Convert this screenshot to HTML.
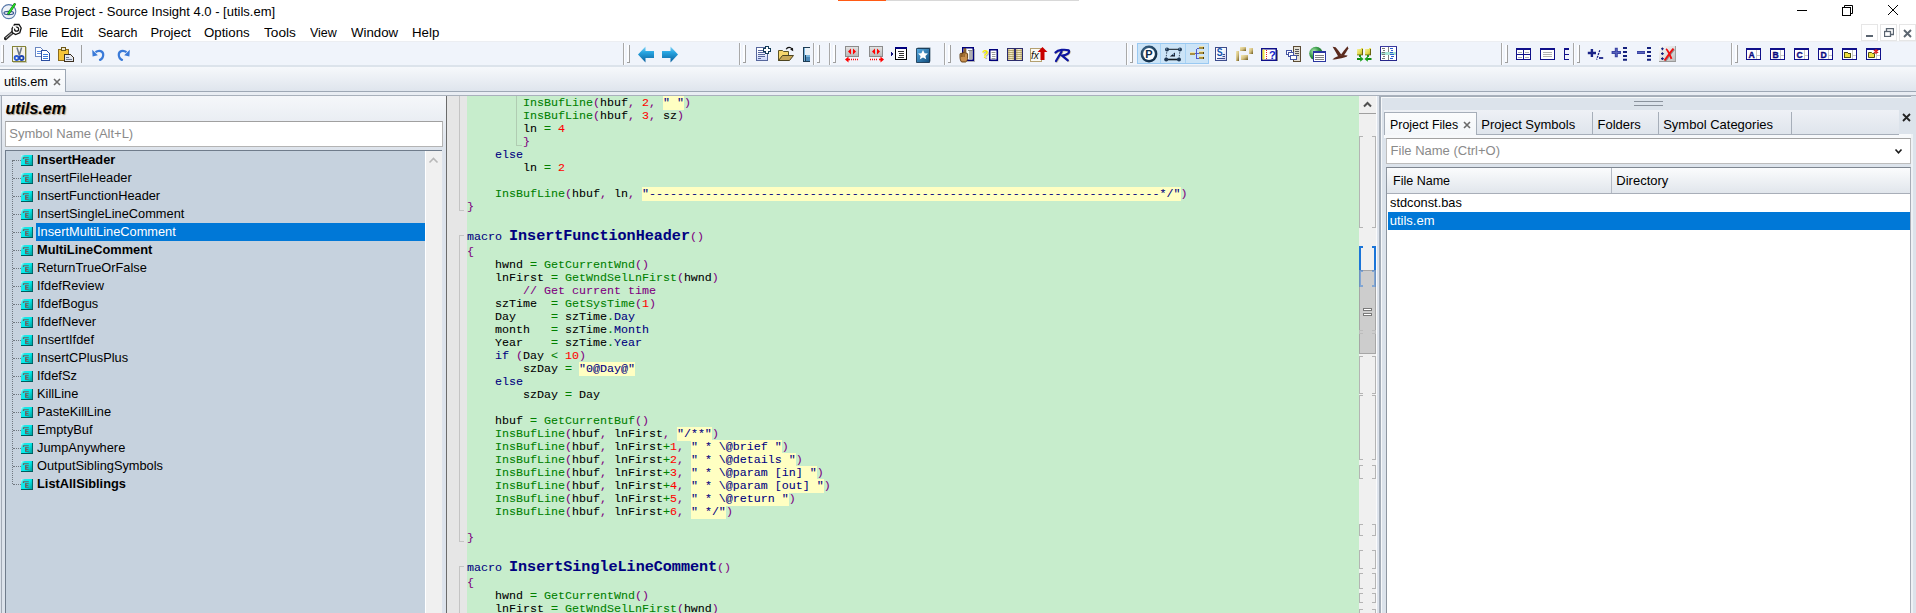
<!DOCTYPE html>
<html><head><meta charset="utf-8"><style>
html,body{margin:0;padding:0;width:1916px;height:613px;overflow:hidden;background:#fff;position:relative}
body{font-family:"Liberation Sans",sans-serif}
div,svg{position:absolute}
.c{-webkit-text-stroke:0.08px currentColor}
</style></head><body>
<div style="position:absolute;left:0px;top:0px;width:1916px;height:42px;background:#fff"></div>
<div style="position:absolute;left:838px;top:0px;width:48px;height:1px;background:#ff5a14"></div>
<div style="position:absolute;left:886px;top:0px;width:193px;height:1px;background:#d8d8d8"></div>
<svg style="position:absolute;left:1px;top:3px" width="17" height="17" viewBox="0 0 17 17"><circle cx="7.8" cy="8.6" r="7" fill="#eef2f8" stroke="#5878a8" stroke-width="1.1"/><ellipse cx="7.8" cy="10" rx="4.8" ry="1.6" fill="none" stroke="#3a5a90" stroke-width="1.2"/><path d="M7.6 10.4L13.6 1.4" stroke="#1a6a1a" stroke-width="2.6" stroke-linecap="round"/><path d="M7.6 10.4L13.6 1.4" stroke="#22e022" stroke-width="1.6" stroke-linecap="round"/></svg>
<div style="position:absolute;left:21.5px;top:4.70px;height:13px;line-height:13px;font-family:'Liberation Sans', sans-serif;font-size:13px;color:#000;white-space:pre;">Base Project - Source Insight 4.0 - [utils.em]</div>
<div style="position:absolute;left:1797px;top:10px;width:10px;height:1px;background:#000"></div>
<svg style="position:absolute;left:1841px;top:4px" width="13" height="12" viewBox="0 0 13 12"><rect x="1.5" y="3.5" width="8" height="8" fill="none" stroke="#000"/><path d="M3.5 3.5V1.5H11.5V9.5H9.5" fill="none" stroke="#000"/></svg>
<svg style="position:absolute;left:1888px;top:5px" width="10" height="10" viewBox="0 0 10 10"><path d="M0 0L10 10M10 0L0 10" stroke="#000" stroke-width="1"/></svg>
<svg style="position:absolute;left:4px;top:23px" width="18" height="18" viewBox="0 0 18 18"><path d="M1.5 15.5L9 9" stroke="#222" stroke-width="3.4" stroke-linecap="round"/><path d="M2 15L9 9" stroke="#c8c8c8" stroke-width="1.6" stroke-dasharray="1 0.6"/><path d="M10.5 1.5L15 1.5L17.2 5L15.8 9.8L11.6 11.6L8.2 9.6L8 5.6Z" fill="#fff" stroke="#111" stroke-width="1.3"/><circle cx="12.6" cy="6.2" r="2" fill="#fff" stroke="#111" stroke-width="1.2"/><path d="M9 3L12 5.5" stroke="#fff" stroke-width="2"/></svg>
<div style="position:absolute;left:28.6px;top:25.90px;height:13px;line-height:13px;font-family:'Liberation Sans', sans-serif;font-size:13px;color:#000;white-space:pre;transform:scaleX(0.9);transform-origin:0 0;">File</div>
<div style="position:absolute;left:61.4px;top:25.90px;height:13px;line-height:13px;font-family:'Liberation Sans', sans-serif;font-size:13px;color:#000;white-space:pre;transform:scaleX(0.98);transform-origin:0 0;">Edit</div>
<div style="position:absolute;left:97.5px;top:25.90px;height:13px;line-height:13px;font-family:'Liberation Sans', sans-serif;font-size:13px;color:#000;white-space:pre;transform:scaleX(0.955);transform-origin:0 0;">Search</div>
<div style="position:absolute;left:150.4px;top:25.90px;height:13px;line-height:13px;font-family:'Liberation Sans', sans-serif;font-size:13px;color:#000;white-space:pre;">Project</div>
<div style="position:absolute;left:204.4px;top:25.90px;height:13px;line-height:13px;font-family:'Liberation Sans', sans-serif;font-size:13px;color:#000;white-space:pre;transform:scaleX(1.02);transform-origin:0 0;">Options</div>
<div style="position:absolute;left:264.2px;top:25.90px;height:13px;line-height:13px;font-family:'Liberation Sans', sans-serif;font-size:13px;color:#000;white-space:pre;transform:scaleX(1.05);transform-origin:0 0;">Tools</div>
<div style="position:absolute;left:310.3px;top:25.90px;height:13px;line-height:13px;font-family:'Liberation Sans', sans-serif;font-size:13px;color:#000;white-space:pre;transform:scaleX(0.96);transform-origin:0 0;">View</div>
<div style="position:absolute;left:351px;top:25.90px;height:13px;line-height:13px;font-family:'Liberation Sans', sans-serif;font-size:13px;color:#000;white-space:pre;transform:scaleX(1.02);transform-origin:0 0;">Window</div>
<div style="position:absolute;left:412.4px;top:25.90px;height:13px;line-height:13px;font-family:'Liberation Sans', sans-serif;font-size:13px;color:#000;white-space:pre;transform:scaleX(1.02);transform-origin:0 0;">Help</div>
<div style="position:absolute;left:1861px;top:24px;width:17px;height:17px;box-sizing:border-box;border:1px solid #e6e6e6;background:#fff"></div>
<div style="position:absolute;left:1880px;top:24px;width:17px;height:17px;box-sizing:border-box;border:1px solid #e6e6e6;background:#fff"></div>
<div style="position:absolute;left:1899px;top:24px;width:17px;height:17px;box-sizing:border-box;border:1px solid #e6e6e6;background:#fff"></div>
<div style="position:absolute;left:1866px;top:35px;width:7px;height:2px;background:#5a6470"></div>
<svg style="position:absolute;left:1884px;top:28px" width="10" height="9" viewBox="0 0 10 9"><rect x="0.5" y="3.5" width="6" height="5" fill="none" stroke="#5a6470" stroke-width="1.3"/><path d="M2.5 3.5V0.5H9.5V6.5H6.5" fill="none" stroke="#5a6470" stroke-width="1.3"/></svg>
<svg style="position:absolute;left:1903px;top:29px" width="10" height="9" viewBox="0 0 10 9"><path d="M1 1L8 8M8 1L1 8" stroke="#5c6670" stroke-width="1.9"/></svg>
<div style="position:absolute;left:0px;top:41px;width:1916px;height:1px;background:#eceef2"></div>
<div style="position:absolute;left:0px;top:42px;width:1916px;height:23px;background:#f0f4fb"></div>
<div style="position:absolute;left:0px;top:65px;width:1916px;height:2px;background:#dce3eb"></div>
<div style="position:absolute;left:1px;top:45px;width:2px;height:17px;border-right:1px solid #a0a0a0;border-bottom:1px solid #a0a0a0;background:#fcfdff"></div>
<div style="position:absolute;left:81px;top:45px;width:1px;height:18px;background:#a0a0a0"></div>
<div style="position:absolute;left:623px;top:43px;width:1px;height:22px;background:#a9a9a9"></div>
<div style="position:absolute;left:624px;top:43px;width:1px;height:22px;background:#fcfdff"></div>
<div style="position:absolute;left:739px;top:43px;width:1px;height:22px;background:#a9a9a9"></div>
<div style="position:absolute;left:740px;top:43px;width:1px;height:22px;background:#fcfdff"></div>
<div style="position:absolute;left:813px;top:43px;width:1px;height:22px;background:#a9a9a9"></div>
<div style="position:absolute;left:814px;top:43px;width:1px;height:22px;background:#fcfdff"></div>
<div style="position:absolute;left:829px;top:43px;width:1px;height:22px;background:#a9a9a9"></div>
<div style="position:absolute;left:830px;top:43px;width:1px;height:22px;background:#fcfdff"></div>
<div style="position:absolute;left:944px;top:43px;width:1px;height:22px;background:#a9a9a9"></div>
<div style="position:absolute;left:945px;top:43px;width:1px;height:22px;background:#fcfdff"></div>
<div style="position:absolute;left:1126px;top:43px;width:1px;height:22px;background:#a9a9a9"></div>
<div style="position:absolute;left:1127px;top:43px;width:1px;height:22px;background:#fcfdff"></div>
<div style="position:absolute;left:1501px;top:43px;width:1px;height:22px;background:#a9a9a9"></div>
<div style="position:absolute;left:1502px;top:43px;width:1px;height:22px;background:#fcfdff"></div>
<div style="position:absolute;left:1573px;top:43px;width:1px;height:22px;background:#a9a9a9"></div>
<div style="position:absolute;left:1574px;top:43px;width:1px;height:22px;background:#fcfdff"></div>
<div style="position:absolute;left:1731px;top:43px;width:1px;height:22px;background:#a9a9a9"></div>
<div style="position:absolute;left:1732px;top:43px;width:1px;height:22px;background:#fcfdff"></div>
<div style="position:absolute;left:627px;top:45px;width:2px;height:17px;border-right:1px solid #a0a0a0;border-bottom:1px solid #a0a0a0;background:#fcfdff"></div>
<div style="position:absolute;left:743px;top:45px;width:2px;height:17px;border-right:1px solid #a0a0a0;border-bottom:1px solid #a0a0a0;background:#fcfdff"></div>
<div style="position:absolute;left:817px;top:45px;width:2px;height:17px;border-right:1px solid #a0a0a0;border-bottom:1px solid #a0a0a0;background:#fcfdff"></div>
<div style="position:absolute;left:833px;top:45px;width:2px;height:17px;border-right:1px solid #a0a0a0;border-bottom:1px solid #a0a0a0;background:#fcfdff"></div>
<div style="position:absolute;left:948px;top:45px;width:2px;height:17px;border-right:1px solid #a0a0a0;border-bottom:1px solid #a0a0a0;background:#fcfdff"></div>
<div style="position:absolute;left:1130px;top:45px;width:2px;height:17px;border-right:1px solid #a0a0a0;border-bottom:1px solid #a0a0a0;background:#fcfdff"></div>
<div style="position:absolute;left:1505px;top:45px;width:2px;height:17px;border-right:1px solid #a0a0a0;border-bottom:1px solid #a0a0a0;background:#fcfdff"></div>
<div style="position:absolute;left:1577px;top:45px;width:2px;height:17px;border-right:1px solid #a0a0a0;border-bottom:1px solid #a0a0a0;background:#fcfdff"></div>
<div style="position:absolute;left:1735px;top:45px;width:2px;height:17px;border-right:1px solid #a0a0a0;border-bottom:1px solid #a0a0a0;background:#fcfdff"></div>
<svg style="position:absolute;left:12px;top:46px" width="15" height="17" viewBox="0 0 15 17"><rect x="1" y="1" width="14" height="16" fill="#7a7a40" opacity="0.35"/><rect x="0.5" y="0.5" width="13" height="15" fill="#f6f3ec" stroke="#858438"/><path d="M5 1.5L7.4 9.5M9.6 1.5L7.2 9.5" stroke="#6c7888" stroke-width="1.5"/><circle cx="4.6" cy="12" r="2" fill="none" stroke="#2858d0" stroke-width="1.8"/><circle cx="9.6" cy="12" r="2" fill="none" stroke="#1c44b0" stroke-width="1.8"/></svg>
<svg style="position:absolute;left:35px;top:47px" width="16" height="14" viewBox="0 0 16 14" shape-rendering="crispEdges"><path d="M0.5 0.5H5.5L7.5 2.5V9.5H0.5Z" fill="#fff" stroke="#6a86c0"/><path d="M2 4.5H6M2 6.5H6" stroke="#5a8ade"/><path d="M6.5 3.5H11.5L14.5 6.5V13.5H6.5Z" fill="#fff" stroke="#2c4ea0"/><path d="M8 7.5H13M8 9.5H13M8 11.5H13" stroke="#3a78d8"/></svg>
<svg style="position:absolute;left:58px;top:47px" width="16" height="15" viewBox="0 0 16 15" shape-rendering="crispEdges"><rect x="0.5" y="2.5" width="10" height="11" fill="#f4c438" stroke="#8c6c1c"/><rect x="3.5" y="0.5" width="4" height="3" fill="#efe6c8" stroke="#6c5818"/><path d="M6.5 7.5H12.5L15.5 10.5V14.5H6.5Z" fill="#e4e8f0" stroke="#3c3020"/><path d="M8 10.5H11M8 12.5H14" stroke="#6c7890"/></svg>
<svg style="position:absolute;left:92px;top:48px" width="13" height="13" viewBox="0 0 13 13"><path d="M3.5 4.2C7 1.6 11.5 3 11.2 7.2C11 10 8.8 11.8 7.2 12.4" fill="none" stroke="#3a7ad8" stroke-width="2.2"/><path d="M0.2 1.8L5.8 7.2L0.6 8.4Z" fill="#3a7ad8"/></svg>
<svg style="position:absolute;left:117px;top:48px" width="13" height="13" viewBox="0 0 13 13"><path d="M9.5 4.2C6 1.6 1.5 3 1.8 7.2C2 10 4.2 11.8 5.8 12.4" fill="none" stroke="#3a7ad8" stroke-width="2.2"/><path d="M12.8 1.8L7.2 7.2L12.4 8.4Z" fill="#3a7ad8"/></svg>
<svg style="position:absolute;left:638px;top:46px" width="16" height="17" viewBox="0 0 16 17"><defs><linearGradient id="gb" x1="0" y1="0" x2="0" y2="1"><stop offset="0" stop-color="#8ad6f6"/><stop offset="0.35" stop-color="#28a6e2"/><stop offset="1" stop-color="#0a5e9c"/></linearGradient></defs><path d="M0 8.5L7.5 0.5V5H16V12H7.5V16.5Z" fill="url(#gb)"/></svg>
<svg style="position:absolute;left:662px;top:46px" width="16" height="17" viewBox="0 0 16 17"><path d="M16 8.5L8.5 0.5V5H0V12H8.5V16.5Z" fill="url(#gb)"/></svg>
<svg style="position:absolute;left:756px;top:46px" width="15" height="16" viewBox="0 0 15 16" shape-rendering="crispEdges"><defs><linearGradient id="gn" x1="0" y1="0" x2="0" y2="1"><stop offset="0.3" stop-color="#fff"/><stop offset="1" stop-color="#c8d4fa"/></linearGradient></defs><rect x="0.5" y="1.5" width="11" height="13" fill="url(#gn)" stroke="#56669c"/><path d="M2 4.5H8M2 6.5H9M2 8.5H9M2 10.5H9M2 12.5H5" stroke="#56669c"/><path d="M7.5 2.5H9.5V0.5H12.5V2.5H14.5V5.5H12.5V7.5H9.5V5.5H7.5Z" fill="#fff" stroke="#143c58"/></svg>
<svg style="position:absolute;left:778px;top:46px" width="16" height="16" viewBox="0 0 16 16"><path d="M0.5 4.5H4.5L5.5 5.5H10.5V14.5H0.5Z" fill="#f6d66c" stroke="#5c5424"/><path d="M0.5 14.5L4.5 9.5H15.5L11.5 14.5Z" fill="#c8a858" stroke="#4c4420"/><path d="M8.2 3.2C9.5 0.8 12.5 0.8 14 3" fill="none" stroke="#111" stroke-width="1.2"/><path d="M15.2 5.2L15 1.8L12.2 3.4Z" fill="#111"/></svg>
<svg style="position:absolute;left:803px;top:46px" width="7" height="16" viewBox="0 0 7 16" shape-rendering="crispEdges"><rect x="0.5" y="1.5" width="7" height="14" fill="#78b4dc" stroke="#1e3c54"/><rect x="2" y="2" width="5" height="7" fill="#eaf2f8"/><path d="M2.5 9V15" stroke="#1e3c54"/><rect x="3" y="11" width="4" height="4" fill="#4c88b8"/></svg>
<svg style="position:absolute;left:845px;top:46px" width="15" height="17" viewBox="0 0 15 17"><defs><linearGradient id="gg" x1="0" y1="0" x2="0" y2="1"><stop offset="0" stop-color="#e4e4e4"/><stop offset="1" stop-color="#b8b8b8"/></linearGradient></defs><rect x="0.5" y="0.5" width="13" height="10" fill="url(#gg)" stroke="#8c8c8c"/><path d="M6 2.5L3 5.5L6 8.5ZM8 2.5L11 5.5L8 8.5Z" fill="#f00"/><path d="M0 13.5L3.5 10.5V16.5Z" fill="#f00"/><path d="M2 13.5H5" stroke="#f00" stroke-width="1.6"/><path d="M6 13.5H14" stroke="#f00" stroke-width="1.6" stroke-dasharray="1 1"/></svg>
<svg style="position:absolute;left:869px;top:46px" width="15" height="17" viewBox="0 0 15 17"><rect x="0.5" y="0.5" width="13" height="10" fill="url(#gg)" stroke="#8c8c8c"/><path d="M6 2.5L3 5.5L6 8.5ZM8 2.5L11 5.5L8 8.5Z" fill="#f00"/><path d="M15 13.5L11.5 10.5V16.5Z" fill="#f00"/><path d="M10 13.5H13" stroke="#f00" stroke-width="1.6"/><path d="M1 13.5H9" stroke="#f00" stroke-width="1.6" stroke-dasharray="1 1"/></svg>
<svg style="position:absolute;left:891px;top:47px" width="17" height="14" viewBox="0 0 17 14" shape-rendering="crispEdges"><path d="M0 4.5L3 7L0 9.5Z" fill="#10107a"/><rect x="4.5" y="0.5" width="11" height="12" fill="#fff" stroke="#000"/><rect x="4" y="0" width="12" height="2" fill="#000080"/><path d="M7 4.5H13M8 6.5H13M8 8.5H13M7 10.5H13" stroke="#333"/></svg>
<svg style="position:absolute;left:916px;top:46px" width="16" height="17" viewBox="0 0 16 17"><defs><linearGradient id="gbk" x1="0" y1="0" x2="1" y2="1"><stop offset="0" stop-color="#58aee6"/><stop offset="1" stop-color="#104c7c"/></linearGradient></defs><path d="M1.5 1.5H14.5V15.5H1.5Z" fill="#6a8090"/><path d="M0.5 2.5H13.5V16.5H0.5Z" fill="url(#gbk)" stroke="#0c2c48" stroke-width="0.8"/><path d="M7 4L8.6 7.3L12 7.6L9.4 9.9L10.2 13.3L7 11.4L3.8 13.3L4.6 9.9L2 7.6L5.4 7.3Z" fill="#fff"/></svg>
<svg style="position:absolute;left:959px;top:46px" width="18" height="17" viewBox="0 0 18 17"><rect x="5" y="3" width="11" height="13" fill="#555" opacity="0.4"/><rect x="3.75" y="1.75" width="10.5" height="12.5" fill="#fff" stroke="#00007a" stroke-width="1.5"/><path d="M9 4.5H14" stroke="#888"/><rect x="10" y="5" width="3.5" height="8.5" fill="#b0b0b0"/><path d="M1 11V8.2C1 7.2 2.4 7.2 2.4 8.2V7.6C2.4 6.6 3.8 6.6 3.8 7.6V7C3.8 6 5.2 6 5.2 7V3.2C5.2 2 6.8 2 6.8 3.2V7.6C7.2 7 8.4 7 8.6 8V12.5C8.6 14 7.6 15.5 6.6 16H2.6C1.6 15 1 13 1 11Z" fill="#c89050" stroke="#5a3408" stroke-width="0.9"/><path d="M2.4 8.4V11M3.8 7.8V11M5.2 7.2V11" stroke="#6a4010" stroke-width="0.7"/></svg>
<svg style="position:absolute;left:982px;top:47px" width="17" height="15" viewBox="0 0 17 15"><rect x="8.5" y="3.5" width="8" height="11" fill="#666" opacity="0.35"/><rect x="7.75" y="2.75" width="7.5" height="10.5" fill="#fff" stroke="#00007a" stroke-width="1.5"/><path d="M9.5 5.5H13.5M10 7.5H13.5M10 9.5H13.5M9.5 11.5H13.5" stroke="#999"/><text x="1" y="12" font-family="Liberation Sans" font-weight="bold" font-size="11" fill="#888" opacity="0.6">?</text><text x="0" y="11" font-family="Liberation Sans" font-weight="bold" font-size="11" fill="#f6f000">?</text></svg>
<svg style="position:absolute;left:1007px;top:47px" width="16" height="15" viewBox="0 0 16 15" shape-rendering="crispEdges"><defs><linearGradient id="gpg" x1="0" y1="0" x2="1" y2="0"><stop offset="0" stop-color="#c8b47c"/><stop offset="0.5" stop-color="#fbf3d4"/><stop offset="1" stop-color="#c8b47c"/></linearGradient></defs><rect x="0.5" y="1.5" width="7" height="12" fill="url(#gpg)" stroke="#2c2c6c"/><rect x="8.5" y="1.5" width="7" height="12" fill="url(#gpg)" stroke="#2c2c6c"/><path d="M1 3.5H7M1 5.5H7M1 7.5H7M1 9.5H7M1 11.5H7M9 3.5H15M9 5.5H15M9 7.5H15M9 9.5H15M9 11.5H15" stroke="#a8985c" stroke-width="0.8"/></svg>
<svg style="position:absolute;left:1030px;top:47px" width="18" height="16" viewBox="0 0 18 16"><rect x="0.5" y="1.5" width="11" height="13" fill="#fafaf4" stroke="#b4a070"/><text x="1" y="11.5" font-family="Liberation Sans" font-style="italic" font-size="10" fill="#111">fx</text><path d="M12.5 0L17.5 5H14.5V13H10.5V5H7.5Z" fill="#c80000"/></svg>
<svg style="position:absolute;left:1054px;top:46px" width="18" height="17" viewBox="0 0 18 17"><g transform="translate(0.6,0.6)" stroke="#c8c0a0" stroke-width="2.2" fill="none" stroke-linecap="round"><path d="M1.5 6.5C4 3.6 11 3.2 14.6 4.4C16.4 6.2 13 9.2 8 9.6L13.8 14.4"/><path d="M7.6 5.6L2 15"/></g><g stroke="#0c14a0" stroke-width="2.2" fill="none" stroke-linecap="round"><path d="M1.5 6.5C4 3.6 11 3.2 14.6 4.4C16.4 6.2 13 9.2 8 9.6L13.8 14.4"/><path d="M7.6 5.6L2 15"/></g></svg>
<div style="position:absolute;left:1137px;top:43px;width:72px;height:21px;box-sizing:border-box;border:1px solid #99c9f2;background:#cce4f7"></div>
<div style="position:absolute;left:1160px;top:44px;width:1px;height:19px;background:#a8d2f4"></div>
<div style="position:absolute;left:1185px;top:44px;width:1px;height:19px;background:#a8d2f4"></div>
<svg style="position:absolute;left:1140px;top:45px" width="18" height="18" viewBox="0 0 18 18"><defs><radialGradient id="gp" cx="0.4" cy="0.35" r="0.75"><stop offset="0" stop-color="#4a7aa0"/><stop offset="1" stop-color="#041c34"/></radialGradient></defs><circle cx="9" cy="9" r="8.4" fill="url(#gp)"/><circle cx="9" cy="9" r="5.9" fill="#fff"/><text x="5.2" y="13" font-family="Liberation Sans" font-weight="bold" font-size="11" fill="#0a2a4a">P</text></svg>
<svg style="position:absolute;left:1164px;top:46px" width="19" height="16" viewBox="0 0 19 16"><path d="M3 3.3H16" stroke="#101820" stroke-width="1"/><path d="M2 13.5H15" stroke="#101820" stroke-width="1.6"/><path d="M3 3.5L2 13.5M16 3.5L15 13.5" stroke="#2a3a50" stroke-width="0.9" stroke-dasharray="1.5 1.2"/><circle cx="3" cy="3.5" r="2" fill="#1c3450"/><circle cx="16" cy="3.5" r="2" fill="#1c3450"/><circle cx="2.2" cy="13.5" r="2" fill="#1c3450"/><circle cx="15" cy="13.5" r="2" fill="#1c3450"/><circle cx="2.6" cy="3" r="0.7" fill="#7090b0"/><circle cx="15.6" cy="3" r="0.7" fill="#7090b0"/><path d="M5.8 10.6L11 6.4V10.6Z" fill="#101828"/><path d="M8.6 8.8L10.2 7.6V9.4Z" fill="#80b8e8"/></svg>
<svg style="position:absolute;left:1189px;top:46px" width="16" height="15" viewBox="0 0 16 15" shape-rendering="crispEdges"><path d="M7.5 2.5V12.5M7.5 2.5H10M7.5 7.5H10M7.5 12.5H10M5 7.5H7.5" stroke="#5058c8"/><rect x="1" y="6" width="5" height="3" fill="#a89040"/><rect x="1" y="6" width="5" height="1" fill="#f0e4b0"/><rect x="10" y="0" width="5" height="3" fill="#a89040"/><rect x="10" y="5" width="5" height="3" fill="#a89040"/><rect x="10" y="10" width="5" height="3" fill="#a89040"/><rect x="10" y="0" width="5" height="1" fill="#f0e4b0"/><rect x="10" y="5" width="5" height="1" fill="#f0e4b0"/><rect x="10" y="10" width="5" height="1" fill="#f0e4b0"/><rect x="14" y="1" width="1" height="2" fill="#504010"/><rect x="14" y="6" width="1" height="2" fill="#504010"/><rect x="14" y="11" width="1" height="2" fill="#504010"/></svg>
<svg style="position:absolute;left:1215px;top:47px" width="12" height="15" viewBox="0 0 12 15"><defs><linearGradient id="gsd" x1="0" y1="0" x2="1" y2="1"><stop offset="0.4" stop-color="#ffffff"/><stop offset="1" stop-color="#c8c8f0"/></linearGradient></defs><rect x="0.5" y="0.5" width="11" height="13" fill="url(#gsd)" stroke="#3c4c8c"/><text x="1.8" y="9.4" font-family="Liberation Sans" font-weight="bold" font-size="10" fill="#1054b0" textLength="5.8" lengthAdjust="spacingAndGlyphs">S</text><path d="M7.5 7.5H10M7.5 9.5H10M2 11.5H10" stroke="#3c4c8c"/></svg>
<svg style="position:absolute;left:1236px;top:46px" width="18" height="16" viewBox="0 0 18 16"><defs><linearGradient id="gbl" x1="0" y1="0" x2="1" y2="1"><stop offset="0" stop-color="#f4eab8"/><stop offset="0.5" stop-color="#d4c080"/><stop offset="1" stop-color="#6a5820"/></linearGradient></defs><rect x="4" y="1" width="6" height="4" fill="url(#gbl)"/><rect x="13" y="2" width="4" height="6" fill="url(#gbl)"/><rect x="0" y="5" width="3" height="10" fill="url(#gbl)"/><rect x="5" y="9" width="7" height="5" fill="url(#gbl)"/></svg>
<svg style="position:absolute;left:1261px;top:47px" width="17" height="15" viewBox="0 0 17 15"><rect x="0.75" y="1.75" width="14.5" height="11.5" fill="#fff" stroke="#10108a" stroke-width="1.5"/><rect x="16" y="3" width="1" height="11" fill="#888"/><rect x="1.5" y="2.5" width="2" height="10" fill="#f0e840"/><path d="M5.5 3V12" stroke="#e02020" stroke-dasharray="1 1"/><text x="8" y="11.5" font-family="Liberation Sans" font-weight="bold" font-size="11" fill="#1020c8">?</text></svg>
<svg style="position:absolute;left:1286px;top:46px" width="16" height="17" viewBox="0 0 16 17" shape-rendering="crispEdges"><rect x="7.5" y="0.5" width="7" height="15" fill="#e4e0d4" stroke="#5c4c34"/><path d="M9 3.5H13M9 5.5H13M9 7.5H13M9 9.5H13" stroke="#555"/><rect x="0.5" y="4.5" width="5" height="4" fill="#fff" stroke="#4454a4"/><rect x="2.5" y="6.5" width="5" height="4" fill="#fff" stroke="#4454a4"/><rect x="4.5" y="9.5" width="6" height="4" fill="#fff" stroke="#4454a4"/></svg>
<svg style="position:absolute;left:1309px;top:46px" width="17" height="17" viewBox="0 0 17 17"><defs><radialGradient id="gglb" cx="0.35" cy="0.35" r="0.7"><stop offset="0" stop-color="#b8e8b8"/><stop offset="0.5" stop-color="#3ca04c"/><stop offset="1" stop-color="#0c5c1c"/></radialGradient></defs><circle cx="7" cy="7.5" r="6.8" fill="url(#gglb)"/><rect x="4.5" y="5.5" width="12" height="10" fill="#fff" stroke="#2a36a0"/><rect x="4" y="5" width="13" height="2" fill="#2a36a0"/><path d="M6 9.5H15M6 11.5H15M6 13.5H15" stroke="#808080"/></svg>
<svg style="position:absolute;left:1332px;top:46px" width="18" height="16" viewBox="0 0 18 16"><g fill="#5a2a1e"><path d="M0.6 0.8L3.6 1.2C5.5 3.5 8 6.5 9.8 9.2L6.2 10.4C4.4 7.2 2.4 4 0.6 0.8Z"/><path d="M15.6 0.3L16.4 2.6C15 5 13.2 7.6 11.8 9.6L8.2 9.8C10.5 6.5 13 3.2 15.6 0.3Z"/><path d="M0.4 13.4C3 11.2 7 9.2 11 9L15.6 9.4L14.6 10.8C11.5 12 7.5 12.8 4 13.2C2.6 13.4 1.4 13.6 0.4 13.4Z"/></g></svg>
<svg style="position:absolute;left:1356px;top:46px" width="18" height="17" viewBox="0 0 18 17"><defs><linearGradient id="gfd" x1="0" y1="0" x2="1" y2="1"><stop offset="0" stop-color="#f8f4a8"/><stop offset="0.6" stop-color="#e0d848"/><stop offset="1" stop-color="#a09818"/></linearGradient></defs><path d="M1 3H5V2H7V9H1Z" fill="url(#gfd)"/><rect x="6" y="3" width="1" height="6" fill="#6a6410"/><rect x="1" y="8.5" width="6" height="0.8" fill="#6a6410"/><path d="M9 3H13V2H15V9H9Z" fill="url(#gfd)"/><rect x="14" y="3" width="1" height="6" fill="#6a6410"/><rect x="9" y="8.5" width="6" height="0.8" fill="#6a6410"/><path d="M4 9V11M1 13H5.5" stroke="#108a10" stroke-width="1.8"/><path d="M4.2 10.2L7.6 13L4.2 15.8Z" fill="#18a018"/><path d="M12 9V11M15.5 13H11" stroke="#108a10" stroke-width="1.8"/><path d="M11.8 10.2L8.4 13L11.8 15.8Z" fill="#18a018"/></svg>
<svg style="position:absolute;left:1380px;top:46px" width="17" height="15" viewBox="0 0 17 15" shape-rendering="crispEdges"><rect x="0.5" y="0.5" width="16" height="14" fill="#fff" stroke="#26268a"/><rect x="0" y="0" width="17" height="1" fill="#3a3aa0"/><path d="M8.5 1V14" stroke="#808080"/><rect x="1" y="6" width="15" height="3" fill="#a8e4d4"/><path d="M2 2.5H5M3 4.5H5M2 6.5H5M2 8.5H5M3 10.5H5M2 12.5H5" stroke="#777"/><path d="M10 2.5H13M11 4.5H13M10 6.5H13M10 8.5H14M11 10.5H14M10 12.5H13" stroke="#2a5ed0"/></svg>
<svg style="position:absolute;left:1516px;top:48px" width="15" height="12" viewBox="0 0 15 12" shape-rendering="crispEdges"><rect x="0.5" y="0.5" width="14" height="11" fill="#fff" stroke="#10108a"/><rect x="0" y="0" width="15" height="2" fill="#10108a"/><path d="M7.5 0V12M0 6.5H15" stroke="#10108a"/><path d="M2 4.5H6M9 4.5H13M2 9.5H6M9 9.5H13" stroke="#b0b0b0"/></svg>
<svg style="position:absolute;left:1540px;top:48px" width="15" height="12" viewBox="0 0 15 12" shape-rendering="crispEdges"><rect x="0.5" y="0.5" width="14" height="11" fill="#fff" stroke="#10108a"/><rect x="0" y="0" width="15" height="2" fill="#10108a"/><path d="M3 4.5H12M3 6.5H12M3 8.5H12" stroke="#b0b0b0"/></svg>
<svg style="position:absolute;left:1564px;top:48px" width="5" height="12" viewBox="0 0 5 12" shape-rendering="crispEdges"><path d="M4.5 0.5H0.5V11.5H4.5M0.5 6.5H4.5" fill="none" stroke="#10108a"/><rect x="0" y="0" width="5" height="2" fill="#10108a"/></svg>
<svg style="position:absolute;left:1587px;top:46px" width="18" height="16" viewBox="0 0 18 16"><path d="M0.8 7H9M4.9 2.9V11.1" stroke="#1a2488" stroke-width="2.4"/><path d="M12.8 4.2L9.6 13.6" stroke="#1a2488" stroke-width="1.3" stroke-dasharray="2 1"/><path d="M12 12H16.2" stroke="#1a2488" stroke-width="1.8"/></svg>
<svg style="position:absolute;left:1611px;top:46px" width="17" height="16" viewBox="0 0 17 16"><path d="M0.6 6.5H10M5.3 1.8V11.2" stroke="#3a44a4" stroke-width="3"/><path d="M5.3 3V10M1.8 6.5H8.8" stroke="#5a64bc" stroke-width="1"/><path d="M12 2H16M12 6H16M12 10H16M12 13.8H16" stroke="#14207c" stroke-width="1.9"/></svg>
<svg style="position:absolute;left:1636px;top:46px" width="16" height="16" viewBox="0 0 16 16"><path d="M1 6.5H9" stroke="#3a44a4" stroke-width="3"/><path d="M1.5 6.5H8.5" stroke="#5a64bc" stroke-width="1"/><path d="M11 2H15M11 6H15M11 10H15M11 13.8H15" stroke="#14207c" stroke-width="1.9"/></svg>
<svg style="position:absolute;left:1659px;top:46px" width="17" height="16" viewBox="0 0 17 16"><defs><linearGradient id="gx" x1="0" y1="0" x2="1" y2="1"><stop offset="0" stop-color="#fafafa"/><stop offset="0.5" stop-color="#e0e0e0"/><stop offset="1" stop-color="#b8b8b8"/></linearGradient></defs><rect x="0" y="0" width="17" height="16" fill="url(#gx)"/><rect x="16" y="0" width="1" height="16" fill="#a0a0a0"/><rect x="0" y="15" width="17" height="1" fill="#9a9a9a"/><path d="M3.4 1.4V4.2M2 2.8H4.8M3.4 6.2V9M2 7.6H4.8M3.4 11.2V14M2 12.6H4.8" stroke="#14207c" stroke-width="1.1"/><path d="M5.5 14.5C8 11 11.5 6 14.5 2.6" stroke="#909090" stroke-width="1.8" fill="none" transform="translate(0.8,0.8)"/><path d="M5.5 14.5C8 11 11.5 6 14.5 2.6M7 3C9 4 10.5 8 12.5 12.8" stroke="#ee1010" stroke-width="1.9" fill="none"/></svg>
<svg style="position:absolute;left:1746px;top:48px" width="15" height="12" viewBox="0 0 15 12"><rect x="0.5" y="0.5" width="14" height="11" fill="#fff" stroke="#10108a"/><rect x="0" y="0" width="15" height="2" fill="#10108a"/><path d="M10.5 2V11M10.5 7.5H14" stroke="#c8c8c8"/><text x="2.4" y="9.6" font-family="Liberation Sans" font-weight="bold" font-size="8.6" fill="#0a0a80" stroke="#0a0a80" stroke-width="0.35">A</text></svg>
<svg style="position:absolute;left:1770px;top:48px" width="15" height="12" viewBox="0 0 15 12"><rect x="0.5" y="0.5" width="14" height="11" fill="#fff" stroke="#10108a"/><rect x="0" y="0" width="15" height="2" fill="#10108a"/><path d="M10.5 2V11M10.5 7.5H14" stroke="#c8c8c8"/><text x="2.4" y="9.6" font-family="Liberation Sans" font-weight="bold" font-size="8.6" fill="#0a0a80" stroke="#0a0a80" stroke-width="0.35">B</text></svg>
<svg style="position:absolute;left:1794px;top:48px" width="15" height="12" viewBox="0 0 15 12"><rect x="0.5" y="0.5" width="14" height="11" fill="#fff" stroke="#10108a"/><rect x="0" y="0" width="15" height="2" fill="#10108a"/><path d="M10.5 2V11M10.5 7.5H14" stroke="#c8c8c8"/><text x="2.4" y="9.6" font-family="Liberation Sans" font-weight="bold" font-size="8.6" fill="#0a0a80" stroke="#0a0a80" stroke-width="0.35">C</text></svg>
<svg style="position:absolute;left:1818px;top:48px" width="15" height="12" viewBox="0 0 15 12"><rect x="0.5" y="0.5" width="14" height="11" fill="#fff" stroke="#10108a"/><rect x="0" y="0" width="15" height="2" fill="#10108a"/><path d="M10.5 2V11M10.5 7.5H14" stroke="#c8c8c8"/><text x="2.4" y="9.6" font-family="Liberation Sans" font-weight="bold" font-size="8.6" fill="#0a0a80" stroke="#0a0a80" stroke-width="0.35">D</text></svg>
<svg style="position:absolute;left:1842px;top:48px" width="15" height="12" viewBox="0 0 15 12" shape-rendering="crispEdges"><rect x="0.5" y="0.5" width="14" height="11" fill="#fff" stroke="#10108a"/><rect x="0" y="0" width="15" height="2" fill="#10108a"/><path d="M10.5 2V11M10.5 7.5H14" stroke="#c8c8c8"/><path d="M2.5 4.5H5.5L6.5 5.5H8.5V9.5H2.5Z" fill="#f0e040" stroke="#505010"/></svg>
<svg style="position:absolute;left:1866px;top:48px" width="15" height="12" viewBox="0 0 15 12"><rect x="0.5" y="0.5" width="14" height="11" fill="#fff" stroke="#10108a"/><rect x="0" y="0" width="15" height="2" fill="#10108a"/><path d="M10.5 2V11M10.5 7.5H14" stroke="#c8c8c8"/><path d="M2.5 4.5H5.5L6.5 5.5H8.5V9.5H2.5Z" fill="#f0e040" stroke="#505010"/><path d="M10 1V6M7.8 2.2L12.2 4.8M12.2 2.2L7.8 4.8" stroke="#e01010" stroke-width="1.1"/></svg>
<div style="position:absolute;left:0px;top:67px;width:1916px;height:24px;background:linear-gradient(#f6f8fb,#dfe5ed)"></div>
<div style="position:absolute;left:0px;top:91px;width:1916px;height:1px;background:#9ea8b5"></div>
<div style="position:absolute;left:0px;top:92px;width:1916px;height:3px;background:#e9edf3"></div>
<div style="position:absolute;left:0px;top:95px;width:1916px;height:1px;background:#a9b1bc"></div>
<div style="position:absolute;left:-1px;top:69px;width:67px;height:23px;box-sizing:border-box;border:1px solid #9ea8b5;border-bottom:none;background:linear-gradient(#fcfdfe,#f3f6f9)"></div>
<div style="position:absolute;left:4.4px;top:75.00px;height:13px;line-height:13px;font-family:'Liberation Sans', sans-serif;font-size:13px;color:#000;white-space:pre;transform:scaleX(0.98);transform-origin:0 0;">utils.em</div>
<svg style="position:absolute;left:53px;top:78px" width="8" height="8" viewBox="0 0 8 8"><path d="M1 1L7 7M7 1L1 7" stroke="#6a6a6a" stroke-width="1.6"/></svg>
<div style="position:absolute;left:0px;top:96px;width:447px;height:517px;background:#dce3eb"></div>
<div style="position:absolute;left:0px;top:96px;width:1px;height:517px;background:#dce3eb"></div>
<div style="position:absolute;left:1px;top:96px;width:1px;height:517px;background:#a2aab5"></div>
<div style="position:absolute;left:2px;top:96px;width:444px;height:54px;background:linear-gradient(#f5f7fa,#dde3eb)"></div>
<div style="position:absolute;left:5.4px;top:100.96px;height:16px;line-height:16px;font-family:'Liberation Sans', sans-serif;font-size:16px;color:#000;white-space:pre;font-weight:bold;font-style:italic;text-shadow:1px 1px 1px rgba(120,90,40,0.55)">utils.em</div>
<div style="position:absolute;left:5px;top:121px;width:438px;height:26px;box-sizing:border-box;border:1px solid #b4b4b4;border-top-color:#a0a0a0;background:#fff"></div>
<div style="position:absolute;left:9.3px;top:126.60px;height:13px;line-height:13px;font-family:'Liberation Sans', sans-serif;font-size:13px;color:#8a8a8a;white-space:pre;">Symbol Name (Alt+L)</div>
<div style="position:absolute;left:5px;top:150px;width:437px;height:470px;box-sizing:border-box;border-left:1px solid #6f7c8b;border-top:1px solid #6f7c8b;background:#f0f0f0"></div>
<div style="position:absolute;left:6px;top:151px;width:419px;height:462px;background:#c6d2de"></div>
<div style="position:absolute;left:425px;top:151px;width:1px;height:462px;background:#fff"></div>
<svg style="position:absolute;left:428px;top:156px" width="12" height="8" viewBox="0 0 12 8"><path d="M1.5 6.5L5.5 2.5L9.5 6.5" fill="none" stroke="#b8b8b8" stroke-width="1.6"/></svg>
<div style="position:absolute;left:442px;top:150px;width:4px;height:463px;background:#dde3ec"></div>
<div style="position:absolute;left:446px;top:96px;width:1px;height:517px;background:#6b6b6b"></div>
<div style="position:absolute;left:12px;top:160px;width:0;height:324px;border-left:1px dotted #707880"></div>
<div style="position:absolute;left:13px;top:160px;width:8px;height:0;border-top:1px dotted #707880"></div>
<svg style="position:absolute;left:21px;top:155px" width="12" height="11" viewBox="0 0 12 11"><defs><linearGradient id="gc" x1="0" y1="0" x2="1" y2="0.6"><stop offset="0" stop-color="#d8fafa"/><stop offset="0.25" stop-color="#20e4e4"/><stop offset="0.6" stop-color="#00eeee"/><stop offset="1" stop-color="#00a8a8"/></linearGradient></defs><rect x="0" y="0" width="12" height="11" fill="url(#gc)"/><rect x="11" y="0" width="1" height="11" fill="#006a6a"/><rect x="0" y="10" width="12" height="1" fill="#005c5c"/><path d="M2.45 4V2.8H7.8" stroke="#6a6262" stroke-width="1.1" fill="none"/><path d="M7.8 4.7H4.6V8.3H7.8M4.6 6.5H7.4" stroke="#6a6262" stroke-width="1" fill="none"/><rect x="4.1" y="4.2" width="1.3" height="4.6" fill="#6a6262"/></svg>
<div style="position:absolute;left:36.8px;top:152.50px;height:13px;line-height:13px;font-family:'Liberation Sans', sans-serif;font-size:13px;color:#000;white-space:pre;transform:scaleX(0.985);transform-origin:0 0;font-weight:bold">InsertHeader</div>
<div style="position:absolute;left:13px;top:178px;width:8px;height:0;border-top:1px dotted #707880"></div>
<svg style="position:absolute;left:21px;top:173px" width="12" height="11" viewBox="0 0 12 11"><rect x="0" y="0" width="12" height="11" fill="url(#gc)"/><rect x="11" y="0" width="1" height="11" fill="#006a6a"/><rect x="0" y="10" width="12" height="1" fill="#005c5c"/><path d="M2.45 4V2.8H7.8" stroke="#6a6262" stroke-width="1.1" fill="none"/><path d="M7.8 4.7H4.6V8.3H7.8M4.6 6.5H7.4" stroke="#6a6262" stroke-width="1" fill="none"/><rect x="4.1" y="4.2" width="1.3" height="4.6" fill="#6a6262"/></svg>
<div style="position:absolute;left:36.8px;top:170.50px;height:13px;line-height:13px;font-family:'Liberation Sans', sans-serif;font-size:13px;color:#000;white-space:pre;transform:scaleX(0.985);transform-origin:0 0;">InsertFileHeader</div>
<div style="position:absolute;left:13px;top:196px;width:8px;height:0;border-top:1px dotted #707880"></div>
<svg style="position:absolute;left:21px;top:191px" width="12" height="11" viewBox="0 0 12 11"><rect x="0" y="0" width="12" height="11" fill="url(#gc)"/><rect x="11" y="0" width="1" height="11" fill="#006a6a"/><rect x="0" y="10" width="12" height="1" fill="#005c5c"/><path d="M2.45 4V2.8H7.8" stroke="#6a6262" stroke-width="1.1" fill="none"/><path d="M7.8 4.7H4.6V8.3H7.8M4.6 6.5H7.4" stroke="#6a6262" stroke-width="1" fill="none"/><rect x="4.1" y="4.2" width="1.3" height="4.6" fill="#6a6262"/></svg>
<div style="position:absolute;left:36.8px;top:188.50px;height:13px;line-height:13px;font-family:'Liberation Sans', sans-serif;font-size:13px;color:#000;white-space:pre;transform:scaleX(0.985);transform-origin:0 0;">InsertFunctionHeader</div>
<div style="position:absolute;left:13px;top:214px;width:8px;height:0;border-top:1px dotted #707880"></div>
<svg style="position:absolute;left:21px;top:209px" width="12" height="11" viewBox="0 0 12 11"><rect x="0" y="0" width="12" height="11" fill="url(#gc)"/><rect x="11" y="0" width="1" height="11" fill="#006a6a"/><rect x="0" y="10" width="12" height="1" fill="#005c5c"/><path d="M2.45 4V2.8H7.8" stroke="#6a6262" stroke-width="1.1" fill="none"/><path d="M7.8 4.7H4.6V8.3H7.8M4.6 6.5H7.4" stroke="#6a6262" stroke-width="1" fill="none"/><rect x="4.1" y="4.2" width="1.3" height="4.6" fill="#6a6262"/></svg>
<div style="position:absolute;left:36.8px;top:206.50px;height:13px;line-height:13px;font-family:'Liberation Sans', sans-serif;font-size:13px;color:#000;white-space:pre;transform:scaleX(0.985);transform-origin:0 0;">InsertSingleLineComment</div>
<div style="position:absolute;left:13px;top:232px;width:8px;height:0;border-top:1px dotted #707880"></div>
<div style="position:absolute;left:36px;top:223px;width:389px;height:18px;background:#0078d7"></div>
<svg style="position:absolute;left:21px;top:227px" width="12" height="11" viewBox="0 0 12 11"><rect x="0" y="0" width="12" height="11" fill="url(#gc)"/><rect x="11" y="0" width="1" height="11" fill="#006a6a"/><rect x="0" y="10" width="12" height="1" fill="#005c5c"/><path d="M2.45 4V2.8H7.8" stroke="#6a6262" stroke-width="1.1" fill="none"/><path d="M7.8 4.7H4.6V8.3H7.8M4.6 6.5H7.4" stroke="#6a6262" stroke-width="1" fill="none"/><rect x="4.1" y="4.2" width="1.3" height="4.6" fill="#6a6262"/></svg>
<div style="position:absolute;left:36.8px;top:224.50px;height:13px;line-height:13px;font-family:'Liberation Sans', sans-serif;font-size:13px;color:#fff;white-space:pre;transform:scaleX(0.985);transform-origin:0 0;">InsertMultiLineComment</div>
<div style="position:absolute;left:13px;top:250px;width:8px;height:0;border-top:1px dotted #707880"></div>
<svg style="position:absolute;left:21px;top:245px" width="12" height="11" viewBox="0 0 12 11"><rect x="0" y="0" width="12" height="11" fill="url(#gc)"/><rect x="11" y="0" width="1" height="11" fill="#006a6a"/><rect x="0" y="10" width="12" height="1" fill="#005c5c"/><path d="M2.45 4V2.8H7.8" stroke="#6a6262" stroke-width="1.1" fill="none"/><path d="M7.8 4.7H4.6V8.3H7.8M4.6 6.5H7.4" stroke="#6a6262" stroke-width="1" fill="none"/><rect x="4.1" y="4.2" width="1.3" height="4.6" fill="#6a6262"/></svg>
<div style="position:absolute;left:36.8px;top:242.50px;height:13px;line-height:13px;font-family:'Liberation Sans', sans-serif;font-size:13px;color:#000;white-space:pre;transform:scaleX(0.985);transform-origin:0 0;font-weight:bold">MultiLineComment</div>
<div style="position:absolute;left:13px;top:268px;width:8px;height:0;border-top:1px dotted #707880"></div>
<svg style="position:absolute;left:21px;top:263px" width="12" height="11" viewBox="0 0 12 11"><rect x="0" y="0" width="12" height="11" fill="url(#gc)"/><rect x="11" y="0" width="1" height="11" fill="#006a6a"/><rect x="0" y="10" width="12" height="1" fill="#005c5c"/><path d="M2.45 4V2.8H7.8" stroke="#6a6262" stroke-width="1.1" fill="none"/><path d="M7.8 4.7H4.6V8.3H7.8M4.6 6.5H7.4" stroke="#6a6262" stroke-width="1" fill="none"/><rect x="4.1" y="4.2" width="1.3" height="4.6" fill="#6a6262"/></svg>
<div style="position:absolute;left:36.8px;top:260.50px;height:13px;line-height:13px;font-family:'Liberation Sans', sans-serif;font-size:13px;color:#000;white-space:pre;transform:scaleX(0.985);transform-origin:0 0;">ReturnTrueOrFalse</div>
<div style="position:absolute;left:13px;top:286px;width:8px;height:0;border-top:1px dotted #707880"></div>
<svg style="position:absolute;left:21px;top:281px" width="12" height="11" viewBox="0 0 12 11"><rect x="0" y="0" width="12" height="11" fill="url(#gc)"/><rect x="11" y="0" width="1" height="11" fill="#006a6a"/><rect x="0" y="10" width="12" height="1" fill="#005c5c"/><path d="M2.45 4V2.8H7.8" stroke="#6a6262" stroke-width="1.1" fill="none"/><path d="M7.8 4.7H4.6V8.3H7.8M4.6 6.5H7.4" stroke="#6a6262" stroke-width="1" fill="none"/><rect x="4.1" y="4.2" width="1.3" height="4.6" fill="#6a6262"/></svg>
<div style="position:absolute;left:36.8px;top:278.50px;height:13px;line-height:13px;font-family:'Liberation Sans', sans-serif;font-size:13px;color:#000;white-space:pre;transform:scaleX(0.985);transform-origin:0 0;">IfdefReview</div>
<div style="position:absolute;left:13px;top:304px;width:8px;height:0;border-top:1px dotted #707880"></div>
<svg style="position:absolute;left:21px;top:299px" width="12" height="11" viewBox="0 0 12 11"><rect x="0" y="0" width="12" height="11" fill="url(#gc)"/><rect x="11" y="0" width="1" height="11" fill="#006a6a"/><rect x="0" y="10" width="12" height="1" fill="#005c5c"/><path d="M2.45 4V2.8H7.8" stroke="#6a6262" stroke-width="1.1" fill="none"/><path d="M7.8 4.7H4.6V8.3H7.8M4.6 6.5H7.4" stroke="#6a6262" stroke-width="1" fill="none"/><rect x="4.1" y="4.2" width="1.3" height="4.6" fill="#6a6262"/></svg>
<div style="position:absolute;left:36.8px;top:296.50px;height:13px;line-height:13px;font-family:'Liberation Sans', sans-serif;font-size:13px;color:#000;white-space:pre;transform:scaleX(0.985);transform-origin:0 0;">IfdefBogus</div>
<div style="position:absolute;left:13px;top:322px;width:8px;height:0;border-top:1px dotted #707880"></div>
<svg style="position:absolute;left:21px;top:317px" width="12" height="11" viewBox="0 0 12 11"><rect x="0" y="0" width="12" height="11" fill="url(#gc)"/><rect x="11" y="0" width="1" height="11" fill="#006a6a"/><rect x="0" y="10" width="12" height="1" fill="#005c5c"/><path d="M2.45 4V2.8H7.8" stroke="#6a6262" stroke-width="1.1" fill="none"/><path d="M7.8 4.7H4.6V8.3H7.8M4.6 6.5H7.4" stroke="#6a6262" stroke-width="1" fill="none"/><rect x="4.1" y="4.2" width="1.3" height="4.6" fill="#6a6262"/></svg>
<div style="position:absolute;left:36.8px;top:314.50px;height:13px;line-height:13px;font-family:'Liberation Sans', sans-serif;font-size:13px;color:#000;white-space:pre;transform:scaleX(0.985);transform-origin:0 0;">IfdefNever</div>
<div style="position:absolute;left:13px;top:340px;width:8px;height:0;border-top:1px dotted #707880"></div>
<svg style="position:absolute;left:21px;top:335px" width="12" height="11" viewBox="0 0 12 11"><rect x="0" y="0" width="12" height="11" fill="url(#gc)"/><rect x="11" y="0" width="1" height="11" fill="#006a6a"/><rect x="0" y="10" width="12" height="1" fill="#005c5c"/><path d="M2.45 4V2.8H7.8" stroke="#6a6262" stroke-width="1.1" fill="none"/><path d="M7.8 4.7H4.6V8.3H7.8M4.6 6.5H7.4" stroke="#6a6262" stroke-width="1" fill="none"/><rect x="4.1" y="4.2" width="1.3" height="4.6" fill="#6a6262"/></svg>
<div style="position:absolute;left:36.8px;top:332.50px;height:13px;line-height:13px;font-family:'Liberation Sans', sans-serif;font-size:13px;color:#000;white-space:pre;transform:scaleX(0.985);transform-origin:0 0;">InsertIfdef</div>
<div style="position:absolute;left:13px;top:358px;width:8px;height:0;border-top:1px dotted #707880"></div>
<svg style="position:absolute;left:21px;top:353px" width="12" height="11" viewBox="0 0 12 11"><rect x="0" y="0" width="12" height="11" fill="url(#gc)"/><rect x="11" y="0" width="1" height="11" fill="#006a6a"/><rect x="0" y="10" width="12" height="1" fill="#005c5c"/><path d="M2.45 4V2.8H7.8" stroke="#6a6262" stroke-width="1.1" fill="none"/><path d="M7.8 4.7H4.6V8.3H7.8M4.6 6.5H7.4" stroke="#6a6262" stroke-width="1" fill="none"/><rect x="4.1" y="4.2" width="1.3" height="4.6" fill="#6a6262"/></svg>
<div style="position:absolute;left:36.8px;top:350.50px;height:13px;line-height:13px;font-family:'Liberation Sans', sans-serif;font-size:13px;color:#000;white-space:pre;transform:scaleX(0.985);transform-origin:0 0;">InsertCPlusPlus</div>
<div style="position:absolute;left:13px;top:376px;width:8px;height:0;border-top:1px dotted #707880"></div>
<svg style="position:absolute;left:21px;top:371px" width="12" height="11" viewBox="0 0 12 11"><rect x="0" y="0" width="12" height="11" fill="url(#gc)"/><rect x="11" y="0" width="1" height="11" fill="#006a6a"/><rect x="0" y="10" width="12" height="1" fill="#005c5c"/><path d="M2.45 4V2.8H7.8" stroke="#6a6262" stroke-width="1.1" fill="none"/><path d="M7.8 4.7H4.6V8.3H7.8M4.6 6.5H7.4" stroke="#6a6262" stroke-width="1" fill="none"/><rect x="4.1" y="4.2" width="1.3" height="4.6" fill="#6a6262"/></svg>
<div style="position:absolute;left:36.8px;top:368.50px;height:13px;line-height:13px;font-family:'Liberation Sans', sans-serif;font-size:13px;color:#000;white-space:pre;transform:scaleX(0.985);transform-origin:0 0;">IfdefSz</div>
<div style="position:absolute;left:13px;top:394px;width:8px;height:0;border-top:1px dotted #707880"></div>
<svg style="position:absolute;left:21px;top:389px" width="12" height="11" viewBox="0 0 12 11"><rect x="0" y="0" width="12" height="11" fill="url(#gc)"/><rect x="11" y="0" width="1" height="11" fill="#006a6a"/><rect x="0" y="10" width="12" height="1" fill="#005c5c"/><path d="M2.45 4V2.8H7.8" stroke="#6a6262" stroke-width="1.1" fill="none"/><path d="M7.8 4.7H4.6V8.3H7.8M4.6 6.5H7.4" stroke="#6a6262" stroke-width="1" fill="none"/><rect x="4.1" y="4.2" width="1.3" height="4.6" fill="#6a6262"/></svg>
<div style="position:absolute;left:36.8px;top:386.50px;height:13px;line-height:13px;font-family:'Liberation Sans', sans-serif;font-size:13px;color:#000;white-space:pre;transform:scaleX(0.985);transform-origin:0 0;">KillLine</div>
<div style="position:absolute;left:13px;top:412px;width:8px;height:0;border-top:1px dotted #707880"></div>
<svg style="position:absolute;left:21px;top:407px" width="12" height="11" viewBox="0 0 12 11"><rect x="0" y="0" width="12" height="11" fill="url(#gc)"/><rect x="11" y="0" width="1" height="11" fill="#006a6a"/><rect x="0" y="10" width="12" height="1" fill="#005c5c"/><path d="M2.45 4V2.8H7.8" stroke="#6a6262" stroke-width="1.1" fill="none"/><path d="M7.8 4.7H4.6V8.3H7.8M4.6 6.5H7.4" stroke="#6a6262" stroke-width="1" fill="none"/><rect x="4.1" y="4.2" width="1.3" height="4.6" fill="#6a6262"/></svg>
<div style="position:absolute;left:36.8px;top:404.50px;height:13px;line-height:13px;font-family:'Liberation Sans', sans-serif;font-size:13px;color:#000;white-space:pre;transform:scaleX(0.985);transform-origin:0 0;">PasteKillLine</div>
<div style="position:absolute;left:13px;top:430px;width:8px;height:0;border-top:1px dotted #707880"></div>
<svg style="position:absolute;left:21px;top:425px" width="12" height="11" viewBox="0 0 12 11"><rect x="0" y="0" width="12" height="11" fill="url(#gc)"/><rect x="11" y="0" width="1" height="11" fill="#006a6a"/><rect x="0" y="10" width="12" height="1" fill="#005c5c"/><path d="M2.45 4V2.8H7.8" stroke="#6a6262" stroke-width="1.1" fill="none"/><path d="M7.8 4.7H4.6V8.3H7.8M4.6 6.5H7.4" stroke="#6a6262" stroke-width="1" fill="none"/><rect x="4.1" y="4.2" width="1.3" height="4.6" fill="#6a6262"/></svg>
<div style="position:absolute;left:36.8px;top:422.50px;height:13px;line-height:13px;font-family:'Liberation Sans', sans-serif;font-size:13px;color:#000;white-space:pre;transform:scaleX(0.985);transform-origin:0 0;">EmptyBuf</div>
<div style="position:absolute;left:13px;top:448px;width:8px;height:0;border-top:1px dotted #707880"></div>
<svg style="position:absolute;left:21px;top:443px" width="12" height="11" viewBox="0 0 12 11"><rect x="0" y="0" width="12" height="11" fill="url(#gc)"/><rect x="11" y="0" width="1" height="11" fill="#006a6a"/><rect x="0" y="10" width="12" height="1" fill="#005c5c"/><path d="M2.45 4V2.8H7.8" stroke="#6a6262" stroke-width="1.1" fill="none"/><path d="M7.8 4.7H4.6V8.3H7.8M4.6 6.5H7.4" stroke="#6a6262" stroke-width="1" fill="none"/><rect x="4.1" y="4.2" width="1.3" height="4.6" fill="#6a6262"/></svg>
<div style="position:absolute;left:36.8px;top:440.50px;height:13px;line-height:13px;font-family:'Liberation Sans', sans-serif;font-size:13px;color:#000;white-space:pre;transform:scaleX(0.985);transform-origin:0 0;">JumpAnywhere</div>
<div style="position:absolute;left:13px;top:466px;width:8px;height:0;border-top:1px dotted #707880"></div>
<svg style="position:absolute;left:21px;top:461px" width="12" height="11" viewBox="0 0 12 11"><rect x="0" y="0" width="12" height="11" fill="url(#gc)"/><rect x="11" y="0" width="1" height="11" fill="#006a6a"/><rect x="0" y="10" width="12" height="1" fill="#005c5c"/><path d="M2.45 4V2.8H7.8" stroke="#6a6262" stroke-width="1.1" fill="none"/><path d="M7.8 4.7H4.6V8.3H7.8M4.6 6.5H7.4" stroke="#6a6262" stroke-width="1" fill="none"/><rect x="4.1" y="4.2" width="1.3" height="4.6" fill="#6a6262"/></svg>
<div style="position:absolute;left:36.8px;top:458.50px;height:13px;line-height:13px;font-family:'Liberation Sans', sans-serif;font-size:13px;color:#000;white-space:pre;transform:scaleX(0.985);transform-origin:0 0;">OutputSiblingSymbols</div>
<div style="position:absolute;left:13px;top:484px;width:8px;height:0;border-top:1px dotted #707880"></div>
<svg style="position:absolute;left:21px;top:479px" width="12" height="11" viewBox="0 0 12 11"><rect x="0" y="0" width="12" height="11" fill="url(#gc)"/><rect x="11" y="0" width="1" height="11" fill="#006a6a"/><rect x="0" y="10" width="12" height="1" fill="#005c5c"/><path d="M2.45 4V2.8H7.8" stroke="#6a6262" stroke-width="1.1" fill="none"/><path d="M7.8 4.7H4.6V8.3H7.8M4.6 6.5H7.4" stroke="#6a6262" stroke-width="1" fill="none"/><rect x="4.1" y="4.2" width="1.3" height="4.6" fill="#6a6262"/></svg>
<div style="position:absolute;left:36.8px;top:476.50px;height:13px;line-height:13px;font-family:'Liberation Sans', sans-serif;font-size:13px;color:#000;white-space:pre;transform:scaleX(0.985);transform-origin:0 0;font-weight:bold">ListAllSiblings</div>
<div style="position:absolute;left:447px;top:96px;width:20px;height:517px;background:#e6e6e6"></div>
<div style="position:absolute;left:467px;top:96px;width:892px;height:517px;background:#c7edcc"></div>
<div style="position:absolute;left:1359px;top:96px;width:17px;height:517px;background:#f0f0f0"></div>
<svg style="position:absolute;left:1363px;top:101px" width="10" height="7" viewBox="0 0 10 7"><path d="M1 5.5L4.5 2L8 5.5" fill="none" stroke="#505050" stroke-width="2"/></svg>
<div style="position:absolute;left:1359px;top:113px;width:17px;height:1px;background:#a0a0a0"></div>
<div style="position:absolute;left:1359px;top:136px;width:4px;height:92px;box-sizing:border-box;border:1px solid #b4b4b4;border-right:none"></div>
<div style="position:absolute;left:1372px;top:136px;width:4px;height:92px;box-sizing:border-box;border:1px solid #b4b4b4;border-left:none"></div>
<div style="position:absolute;left:1359px;top:356px;width:4px;height:38px;box-sizing:border-box;border:1px solid #b4b4b4;border-right:none"></div>
<div style="position:absolute;left:1372px;top:356px;width:4px;height:38px;box-sizing:border-box;border:1px solid #b4b4b4;border-left:none"></div>
<div style="position:absolute;left:1359px;top:395px;width:4px;height:65px;box-sizing:border-box;border:1px solid #b4b4b4;border-right:none"></div>
<div style="position:absolute;left:1372px;top:395px;width:4px;height:65px;box-sizing:border-box;border:1px solid #b4b4b4;border-left:none"></div>
<div style="position:absolute;left:1359px;top:465px;width:4px;height:14px;box-sizing:border-box;border:1px solid #b4b4b4;border-right:none"></div>
<div style="position:absolute;left:1372px;top:465px;width:4px;height:14px;box-sizing:border-box;border:1px solid #b4b4b4;border-left:none"></div>
<div style="position:absolute;left:1359px;top:524px;width:4px;height:12px;box-sizing:border-box;border:1px solid #b4b4b4;border-right:none"></div>
<div style="position:absolute;left:1372px;top:524px;width:4px;height:12px;box-sizing:border-box;border:1px solid #b4b4b4;border-left:none"></div>
<div style="position:absolute;left:1359px;top:550px;width:4px;height:19px;box-sizing:border-box;border:1px solid #b4b4b4;border-right:none"></div>
<div style="position:absolute;left:1372px;top:550px;width:4px;height:19px;box-sizing:border-box;border:1px solid #b4b4b4;border-left:none"></div>
<div style="position:absolute;left:1359px;top:573px;width:4px;height:16px;box-sizing:border-box;border:1px solid #b4b4b4;border-right:none"></div>
<div style="position:absolute;left:1372px;top:573px;width:4px;height:16px;box-sizing:border-box;border:1px solid #b4b4b4;border-left:none"></div>
<div style="position:absolute;left:1359px;top:593px;width:4px;height:10px;box-sizing:border-box;border:1px solid #b4b4b4;border-right:none"></div>
<div style="position:absolute;left:1372px;top:593px;width:4px;height:10px;box-sizing:border-box;border:1px solid #b4b4b4;border-left:none"></div>
<div style="position:absolute;left:1359px;top:609px;width:4px;height:11px;box-sizing:border-box;border:1px solid #b4b4b4;border-right:none"></div>
<div style="position:absolute;left:1372px;top:609px;width:4px;height:11px;box-sizing:border-box;border:1px solid #b4b4b4;border-left:none"></div>
<div style="position:absolute;left:1359px;top:270px;width:17px;height:84px;box-sizing:border-box;border:1px solid #a6a6a6;background:#cdcdcd"></div>
<div style="position:absolute;left:1359px;top:246px;width:4px;height:41px;box-sizing:border-box;border:2px solid #1a74d8;border-right:none"></div>
<div style="position:absolute;left:1372px;top:246px;width:4px;height:41px;box-sizing:border-box;border:2px solid #1a74d8;border-left:none"></div>
<div style="position:absolute;left:1359px;top:270px;width:17px;height:84px;box-sizing:border-box;border:1px solid #a6a6a6;background:#cdcdcd"></div>
<div style="position:absolute;left:1359px;top:270px;width:4px;height:17px;box-sizing:border-box;border:2px solid rgba(40,120,220,0.45);border-right:none"></div>
<div style="position:absolute;left:1372px;top:270px;width:4px;height:17px;box-sizing:border-box;border:2px solid rgba(40,120,220,0.45);border-left:none"></div>
<div style="position:absolute;left:1359px;top:330px;width:4px;height:4px;box-sizing:border-box;border:1px solid #bdbdbd;border-right:none"></div>
<div style="position:absolute;left:1372px;top:330px;width:4px;height:4px;box-sizing:border-box;border:1px solid #bdbdbd;border-left:none"></div>
<div style="position:absolute;left:1363px;top:308px;width:9px;height:3px;box-sizing:border-box;border:1px solid #7a7a7a;background:#fff"></div>
<div style="position:absolute;left:1363px;top:313px;width:9px;height:3px;box-sizing:border-box;border:1px solid #7a7a7a;background:#fff"></div>
<div style="position:absolute;left:1376px;top:96px;width:3px;height:517px;background:#dde3ec"></div>
<div style="position:absolute;left:1376px;top:96px;width:1px;height:517px;background:#fafbfc"></div>
<div style="position:absolute;left:1379px;top:96px;width:2px;height:517px;background:#a4adb8"></div>
<div style="position:absolute;left:459px;top:96px;width:1px;height:114px;background:#c4c4c4"></div>
<div style="position:absolute;left:459px;top:210px;width:5px;height:1px;background:#c4c4c4"></div>
<div style="position:absolute;left:459px;top:235px;width:5px;height:1px;background:#c4c4c4"></div>
<div style="position:absolute;left:459px;top:235px;width:1px;height:306px;background:#c4c4c4"></div>
<div style="position:absolute;left:459px;top:541px;width:5px;height:1px;background:#c4c4c4"></div>
<div style="position:absolute;left:459px;top:566px;width:5px;height:1px;background:#c4c4c4"></div>
<div style="position:absolute;left:459px;top:566px;width:1px;height:47px;background:#c4c4c4"></div>
<div style="position:absolute;left:516px;top:96px;width:1px;height:49px;background:#b0ccb2"></div>
<div style="position:absolute;left:516px;top:145px;width:6px;height:1px;background:#b0ccb2"></div>
<div class="c" style="position:absolute;left:467px;top:97px;height:13px;line-height:13px;font-family:'Liberation Mono', monospace;font-size:11.665px;white-space:pre"><span style="color:#000000">        </span><span style="color:#008000">InsBufLine</span><span style="color:#800080">(</span><span style="color:#000000">hbuf</span><span style="color:#800080">,</span><span style="color:#000000"> </span><span style="color:#ff0000">2</span><span style="color:#800080">,</span><span style="color:#000000"> </span><span style="color:#000080;background:#ffffc2">&quot; &quot;</span><span style="color:#800080">)</span></div>
<div class="c" style="position:absolute;left:467px;top:110px;height:13px;line-height:13px;font-family:'Liberation Mono', monospace;font-size:11.665px;white-space:pre"><span style="color:#000000">        </span><span style="color:#008000">InsBufLine</span><span style="color:#800080">(</span><span style="color:#000000">hbuf</span><span style="color:#800080">,</span><span style="color:#000000"> </span><span style="color:#ff0000">3</span><span style="color:#800080">,</span><span style="color:#000000"> sz</span><span style="color:#800080">)</span></div>
<div class="c" style="position:absolute;left:467px;top:123px;height:13px;line-height:13px;font-family:'Liberation Mono', monospace;font-size:11.665px;white-space:pre"><span style="color:#000000">        ln </span><span style="color:#008000">=</span><span style="color:#000000"> </span><span style="color:#ff0000">4</span></div>
<div class="c" style="position:absolute;left:467px;top:136px;height:13px;line-height:13px;font-family:'Liberation Mono', monospace;font-size:11.665px;white-space:pre"><span style="color:#000000">        </span><span style="color:#800080">}</span></div>
<div class="c" style="position:absolute;left:467px;top:149px;height:13px;line-height:13px;font-family:'Liberation Mono', monospace;font-size:11.665px;white-space:pre"><span style="color:#000000">    </span><span style="color:#000080">else</span></div>
<div class="c" style="position:absolute;left:467px;top:162px;height:13px;line-height:13px;font-family:'Liberation Mono', monospace;font-size:11.665px;white-space:pre"><span style="color:#000000">        ln </span><span style="color:#008000">=</span><span style="color:#000000"> </span><span style="color:#ff0000">2</span></div>
<div class="c" style="position:absolute;left:467px;top:175px;height:13px;line-height:13px;font-family:'Liberation Mono', monospace;font-size:11.665px;white-space:pre"></div>
<div class="c" style="position:absolute;left:467px;top:188px;height:13px;line-height:13px;font-family:'Liberation Mono', monospace;font-size:11.665px;white-space:pre"><span style="color:#000000">    </span><span style="color:#008000">InsBufLine</span><span style="color:#800080">(</span><span style="color:#000000">hbuf</span><span style="color:#800080">,</span><span style="color:#000000"> ln</span><span style="color:#800080">,</span><span style="color:#000000"> </span><span style="color:#000080;background:#ffffc2">&quot;-------------------------------------------------------------------------*/&quot;</span><span style="color:#800080">)</span></div>
<div class="c" style="position:absolute;left:467px;top:201px;height:13px;line-height:13px;font-family:'Liberation Mono', monospace;font-size:11.665px;white-space:pre"><span style="color:#800080">}</span></div>
<div class="c" style="position:absolute;left:467px;top:214px;height:13px;line-height:13px;font-family:'Liberation Mono', monospace;font-size:11.665px;white-space:pre"></div>
<div class="c" style="position:absolute;left:467px;top:227px;height:19px;line-height:19px;font-family:'Liberation Mono', monospace;font-size:11.665px;white-space:pre;color:#000080">macro <span style="font-weight:bold;font-size:15.08px">InsertFunctionHeader</span><span style="color:#800080">()</span></div>
<div class="c" style="position:absolute;left:467px;top:246px;height:13px;line-height:13px;font-family:'Liberation Mono', monospace;font-size:11.665px;white-space:pre"><span style="color:#800080">{</span></div>
<div class="c" style="position:absolute;left:467px;top:259px;height:13px;line-height:13px;font-family:'Liberation Mono', monospace;font-size:11.665px;white-space:pre"><span style="color:#000000">    hwnd </span><span style="color:#008000">=</span><span style="color:#000000"> </span><span style="color:#008000">GetCurrentWnd</span><span style="color:#800080">()</span></div>
<div class="c" style="position:absolute;left:467px;top:272px;height:13px;line-height:13px;font-family:'Liberation Mono', monospace;font-size:11.665px;white-space:pre"><span style="color:#000000">    lnFirst </span><span style="color:#008000">=</span><span style="color:#000000"> </span><span style="color:#008000">GetWndSelLnFirst</span><span style="color:#800080">(</span><span style="color:#000000">hwnd</span><span style="color:#800080">)</span></div>
<div class="c" style="position:absolute;left:467px;top:285px;height:13px;line-height:13px;font-family:'Liberation Mono', monospace;font-size:11.665px;white-space:pre"><span style="color:#000000">        </span><span style="color:#800080">// Get current time</span></div>
<div class="c" style="position:absolute;left:467px;top:298px;height:13px;line-height:13px;font-family:'Liberation Mono', monospace;font-size:11.665px;white-space:pre"><span style="color:#000000">    szTime  </span><span style="color:#008000">=</span><span style="color:#000000"> </span><span style="color:#008000">GetSysTime</span><span style="color:#800080">(</span><span style="color:#ff0000">1</span><span style="color:#800080">)</span></div>
<div class="c" style="position:absolute;left:467px;top:311px;height:13px;line-height:13px;font-family:'Liberation Mono', monospace;font-size:11.665px;white-space:pre"><span style="color:#000000">    Day     </span><span style="color:#008000">=</span><span style="color:#000000"> szTime</span><span style="color:#008000">.</span><span style="color:#000080">Day</span></div>
<div class="c" style="position:absolute;left:467px;top:324px;height:13px;line-height:13px;font-family:'Liberation Mono', monospace;font-size:11.665px;white-space:pre"><span style="color:#000000">    month   </span><span style="color:#008000">=</span><span style="color:#000000"> szTime</span><span style="color:#008000">.</span><span style="color:#000080">Month</span></div>
<div class="c" style="position:absolute;left:467px;top:337px;height:13px;line-height:13px;font-family:'Liberation Mono', monospace;font-size:11.665px;white-space:pre"><span style="color:#000000">    Year    </span><span style="color:#008000">=</span><span style="color:#000000"> szTime</span><span style="color:#008000">.</span><span style="color:#000080">Year</span></div>
<div class="c" style="position:absolute;left:467px;top:350px;height:13px;line-height:13px;font-family:'Liberation Mono', monospace;font-size:11.665px;white-space:pre"><span style="color:#000000">    </span><span style="color:#000080">if</span><span style="color:#000000"> </span><span style="color:#800080">(</span><span style="color:#000000">Day </span><span style="color:#008000">&lt;</span><span style="color:#000000"> </span><span style="color:#ff0000">10</span><span style="color:#800080">)</span></div>
<div class="c" style="position:absolute;left:467px;top:363px;height:13px;line-height:13px;font-family:'Liberation Mono', monospace;font-size:11.665px;white-space:pre"><span style="color:#000000">        szDay </span><span style="color:#008000">=</span><span style="color:#000000"> </span><span style="color:#000080;background:#ffffc2">&quot;0@Day@&quot;</span></div>
<div class="c" style="position:absolute;left:467px;top:376px;height:13px;line-height:13px;font-family:'Liberation Mono', monospace;font-size:11.665px;white-space:pre"><span style="color:#000000">    </span><span style="color:#000080">else</span></div>
<div class="c" style="position:absolute;left:467px;top:389px;height:13px;line-height:13px;font-family:'Liberation Mono', monospace;font-size:11.665px;white-space:pre"><span style="color:#000000">        szDay </span><span style="color:#008000">=</span><span style="color:#000000"> Day</span></div>
<div class="c" style="position:absolute;left:467px;top:402px;height:13px;line-height:13px;font-family:'Liberation Mono', monospace;font-size:11.665px;white-space:pre"></div>
<div class="c" style="position:absolute;left:467px;top:415px;height:13px;line-height:13px;font-family:'Liberation Mono', monospace;font-size:11.665px;white-space:pre"><span style="color:#000000">    hbuf </span><span style="color:#008000">=</span><span style="color:#000000"> </span><span style="color:#008000">GetCurrentBuf</span><span style="color:#800080">()</span></div>
<div class="c" style="position:absolute;left:467px;top:428px;height:13px;line-height:13px;font-family:'Liberation Mono', monospace;font-size:11.665px;white-space:pre"><span style="color:#000000">    </span><span style="color:#008000">InsBufLine</span><span style="color:#800080">(</span><span style="color:#000000">hbuf</span><span style="color:#800080">,</span><span style="color:#000000"> lnFirst</span><span style="color:#800080">,</span><span style="color:#000000"> </span><span style="color:#000080;background:#ffffc2">&quot;/**&quot;</span><span style="color:#800080">)</span></div>
<div class="c" style="position:absolute;left:467px;top:441px;height:13px;line-height:13px;font-family:'Liberation Mono', monospace;font-size:11.665px;white-space:pre"><span style="color:#000000">    </span><span style="color:#008000">InsBufLine</span><span style="color:#800080">(</span><span style="color:#000000">hbuf</span><span style="color:#800080">,</span><span style="color:#000000"> lnFirst</span><span style="color:#008000">+</span><span style="color:#ff0000">1</span><span style="color:#800080">,</span><span style="color:#000000"> </span><span style="color:#000080;background:#ffffc2">&quot; * \@brief &quot;</span><span style="color:#800080">)</span></div>
<div class="c" style="position:absolute;left:467px;top:454px;height:13px;line-height:13px;font-family:'Liberation Mono', monospace;font-size:11.665px;white-space:pre"><span style="color:#000000">    </span><span style="color:#008000">InsBufLine</span><span style="color:#800080">(</span><span style="color:#000000">hbuf</span><span style="color:#800080">,</span><span style="color:#000000"> lnFirst</span><span style="color:#008000">+</span><span style="color:#ff0000">2</span><span style="color:#800080">,</span><span style="color:#000000"> </span><span style="color:#000080;background:#ffffc2">&quot; * \@details &quot;</span><span style="color:#800080">)</span></div>
<div class="c" style="position:absolute;left:467px;top:467px;height:13px;line-height:13px;font-family:'Liberation Mono', monospace;font-size:11.665px;white-space:pre"><span style="color:#000000">    </span><span style="color:#008000">InsBufLine</span><span style="color:#800080">(</span><span style="color:#000000">hbuf</span><span style="color:#800080">,</span><span style="color:#000000"> lnFirst</span><span style="color:#008000">+</span><span style="color:#ff0000">3</span><span style="color:#800080">,</span><span style="color:#000000"> </span><span style="color:#000080;background:#ffffc2">&quot; * \@param [in] &quot;</span><span style="color:#800080">)</span></div>
<div class="c" style="position:absolute;left:467px;top:480px;height:13px;line-height:13px;font-family:'Liberation Mono', monospace;font-size:11.665px;white-space:pre"><span style="color:#000000">    </span><span style="color:#008000">InsBufLine</span><span style="color:#800080">(</span><span style="color:#000000">hbuf</span><span style="color:#800080">,</span><span style="color:#000000"> lnFirst</span><span style="color:#008000">+</span><span style="color:#ff0000">4</span><span style="color:#800080">,</span><span style="color:#000000"> </span><span style="color:#000080;background:#ffffc2">&quot; * \@param [out] &quot;</span><span style="color:#800080">)</span></div>
<div class="c" style="position:absolute;left:467px;top:493px;height:13px;line-height:13px;font-family:'Liberation Mono', monospace;font-size:11.665px;white-space:pre"><span style="color:#000000">    </span><span style="color:#008000">InsBufLine</span><span style="color:#800080">(</span><span style="color:#000000">hbuf</span><span style="color:#800080">,</span><span style="color:#000000"> lnFirst</span><span style="color:#008000">+</span><span style="color:#ff0000">5</span><span style="color:#800080">,</span><span style="color:#000000"> </span><span style="color:#000080;background:#ffffc2">&quot; * \@return &quot;</span><span style="color:#800080">)</span></div>
<div class="c" style="position:absolute;left:467px;top:506px;height:13px;line-height:13px;font-family:'Liberation Mono', monospace;font-size:11.665px;white-space:pre"><span style="color:#000000">    </span><span style="color:#008000">InsBufLine</span><span style="color:#800080">(</span><span style="color:#000000">hbuf</span><span style="color:#800080">,</span><span style="color:#000000"> lnFirst</span><span style="color:#008000">+</span><span style="color:#ff0000">6</span><span style="color:#800080">,</span><span style="color:#000000"> </span><span style="color:#000080;background:#ffffc2">&quot; */&quot;</span><span style="color:#800080">)</span></div>
<div class="c" style="position:absolute;left:467px;top:519px;height:13px;line-height:13px;font-family:'Liberation Mono', monospace;font-size:11.665px;white-space:pre"></div>
<div class="c" style="position:absolute;left:467px;top:532px;height:13px;line-height:13px;font-family:'Liberation Mono', monospace;font-size:11.665px;white-space:pre"><span style="color:#800080">}</span></div>
<div class="c" style="position:absolute;left:467px;top:545px;height:13px;line-height:13px;font-family:'Liberation Mono', monospace;font-size:11.665px;white-space:pre"></div>
<div class="c" style="position:absolute;left:467px;top:558px;height:19px;line-height:19px;font-family:'Liberation Mono', monospace;font-size:11.665px;white-space:pre;color:#000080">macro <span style="font-weight:bold;font-size:15.08px">InsertSingleLineComment</span><span style="color:#800080">()</span></div>
<div class="c" style="position:absolute;left:467px;top:577px;height:13px;line-height:13px;font-family:'Liberation Mono', monospace;font-size:11.665px;white-space:pre"><span style="color:#800080">{</span></div>
<div class="c" style="position:absolute;left:467px;top:590px;height:13px;line-height:13px;font-family:'Liberation Mono', monospace;font-size:11.665px;white-space:pre"><span style="color:#000000">    hwnd </span><span style="color:#008000">=</span><span style="color:#000000"> </span><span style="color:#008000">GetCurrentWnd</span><span style="color:#800080">()</span></div>
<div class="c" style="position:absolute;left:467px;top:603px;height:13px;line-height:13px;font-family:'Liberation Mono', monospace;font-size:11.665px;white-space:pre"><span style="color:#000000">    lnFirst </span><span style="color:#008000">=</span><span style="color:#000000"> </span><span style="color:#008000">GetWndSelLnFirst</span><span style="color:#800080">(</span><span style="color:#000000">hwnd</span><span style="color:#800080">)</span></div>
<div style="position:absolute;left:1381px;top:96px;width:535px;height:517px;background:#dce3eb"></div>
<div style="position:absolute;left:1381px;top:96px;width:535px;height:1px;background:#a4adb8"></div>
<div style="position:absolute;left:1381px;top:97px;width:535px;height:1px;background:#f6f8fa"></div>
<div style="position:absolute;left:1381px;top:97px;width:1px;height:516px;background:#f6f8fa"></div>
<div style="position:absolute;left:1634px;top:101px;width:29px;height:1px;background:#8a929c"></div>
<div style="position:absolute;left:1634px;top:105px;width:29px;height:1px;background:#8a929c"></div>
<div style="position:absolute;left:1384px;top:110px;width:515px;height:24px;background:linear-gradient(#eef1f6,#dfe5ec)"></div>
<div style="position:absolute;left:1384px;top:134px;width:527px;height:1px;background:#a6aeb9"></div>
<div style="position:absolute;left:1384px;top:112px;width:93px;height:23px;box-sizing:border-box;border:1px solid #a6aeb9;border-bottom:none;background:linear-gradient(#fbfcfd,#f3f6f9)"></div>
<div style="position:absolute;left:1389.6px;top:117.90px;height:13px;line-height:13px;font-family:'Liberation Sans', sans-serif;font-size:13px;color:#000;white-space:pre;transform:scaleX(0.952);transform-origin:0 0;">Project Files</div>
<svg style="position:absolute;left:1463px;top:121px" width="8" height="8" viewBox="0 0 8 8"><path d="M1 1L7 7M7 1L1 7" stroke="#6a6a6a" stroke-width="1.6"/></svg>
<div style="position:absolute;left:1481.3px;top:117.90px;height:13px;line-height:13px;font-family:'Liberation Sans', sans-serif;font-size:13px;color:#000;white-space:pre;">Project Symbols</div>
<div style="position:absolute;left:1592px;top:112px;width:1px;height:22px;background:#a6aeb9"></div>
<div style="position:absolute;left:1597.5px;top:117.90px;height:13px;line-height:13px;font-family:'Liberation Sans', sans-serif;font-size:13px;color:#000;white-space:pre;">Folders</div>
<div style="position:absolute;left:1658px;top:112px;width:1px;height:22px;background:#a6aeb9"></div>
<div style="position:absolute;left:1663.2px;top:117.90px;height:13px;line-height:13px;font-family:'Liberation Sans', sans-serif;font-size:13px;color:#000;white-space:pre;">Symbol Categories</div>
<div style="position:absolute;left:1791px;top:112px;width:1px;height:22px;background:#a6aeb9"></div>
<svg style="position:absolute;left:1902px;top:113px" width="9" height="9" viewBox="0 0 9 9"><path d="M1 1L8 8M8 1L1 8" stroke="#222" stroke-width="1.8"/></svg>
<div style="position:absolute;left:1384px;top:135px;width:527px;height:3px;background:#f7f9fb"></div>
<div style="position:absolute;left:1386px;top:138px;width:525px;height:26px;box-sizing:border-box;border:1px solid #bdbdbd;border-top-color:#a2a2a2;background:#fff"></div>
<div style="position:absolute;left:1390.6px;top:144.00px;height:13px;line-height:13px;font-family:'Liberation Sans', sans-serif;font-size:13px;color:#8a8a8a;white-space:pre;">File Name (Ctrl+O)</div>
<svg style="position:absolute;left:1894px;top:148px" width="10" height="7" viewBox="0 0 10 7"><path d="M1.5 1.5L4.5 4.8L7.5 1.5" fill="none" stroke="#1a1a1a" stroke-width="1.6"/></svg>
<div style="position:absolute;left:1386px;top:167px;width:525px;height:450px;box-sizing:border-box;border:1px solid #a8aeb8;border-left-color:#8e96a0;border-top-color:#7e8690;background:#fff"></div>
<div style="position:absolute;left:1387px;top:168px;width:523px;height:25px;background:linear-gradient(#fbfcfd,#e1e6ec)"></div>
<div style="position:absolute;left:1387px;top:193px;width:523px;height:1px;background:#a8aeb8"></div>
<div style="position:absolute;left:1611px;top:168px;width:1px;height:25px;background:#b4bac4"></div>
<div style="position:absolute;left:1392.5px;top:174.00px;height:13px;line-height:13px;font-family:'Liberation Sans', sans-serif;font-size:13px;color:#000;white-space:pre;transform:scaleX(0.963);transform-origin:0 0;">File Name</div>
<div style="position:absolute;left:1616.3px;top:174.00px;height:13px;line-height:13px;font-family:'Liberation Sans', sans-serif;font-size:13px;color:#000;white-space:pre;">Directory</div>
<div style="position:absolute;left:1389.7px;top:196.10px;height:13px;line-height:13px;font-family:'Liberation Sans', sans-serif;font-size:13px;color:#000;white-space:pre;transform:scaleX(0.984);transform-origin:0 0;">stdconst.bas</div>
<div style="position:absolute;left:1388px;top:212px;width:522px;height:18px;background:#0078d7"></div>
<div style="position:absolute;left:1389.7px;top:214.20px;height:13px;line-height:13px;font-family:'Liberation Sans', sans-serif;font-size:13px;color:#fff;white-space:pre;">utils.em</div>
<div style="position:absolute;left:1911px;top:96px;width:5px;height:517px;background:#dce3eb"></div>
<div style="position:absolute;left:1911px;top:134px;width:2px;height:479px;background:#eef1f5"></div>
<div style="position:absolute;left:1899px;top:134px;width:12px;height:1px;background:#f7f9fb"></div>
</body></html>
